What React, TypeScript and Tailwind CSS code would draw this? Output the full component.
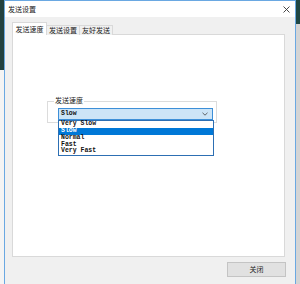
import React from "react";

const cjk = { fontFamily: '"Noto Sans CJK SC", "Noto Sans", sans-serif' };
const mono = { fontFamily: '"Liberation Mono", "DejaVu Sans Mono", monospace' };

const items = ["Very Slow", "Slow", "Normal", "Fast", "Very Fast"];

export default function App() {
  return (
    <div className="w-[300px] h-[284px] flex overflow-hidden bg-[#d9d9d9]" style={cjk}>
      <div className="w-[4px] flex flex-col">
        <div className="h-[70px] bg-[#23413f]" />
        <div className="flex-1 bg-[#f4f4f4]" />
      </div>
      <div className="w-[292px] h-[284px] border-x border-t border-[#6aa8e2] flex flex-col bg-[#f0f0f0]">
        <div className="h-[16px] bg-white flex items-center justify-between pl-[3px] pr-[5px]">
          <span className="text-[7px] leading-none text-[#222]">发送设置</span>
          <svg width="7" height="7" viewBox="0 0 7 7">
            <path d="M0.5 0.5L6.5 6.5M6.5 0.5L0.5 6.5" stroke="#333" strokeWidth="0.9" />
          </svg>
        </div>
        <div className="pl-[7px] pt-[6px] pr-[9px] flex flex-col">
          <div className="h-[12px] flex items-end relative z-10 -mb-[1px]">
            <div className="h-[13px] w-[35px] bg-white border-x border-t border-[#d9d9d9] flex items-center justify-center text-[7px] leading-none text-[#222]">
              发送速度
            </div>
            <div className="h-[10px] w-[33px] bg-[#f0f0f0] border border-b-0 border-l-0 border-[#d9d9d9] flex items-center justify-center text-[7px] leading-none text-[#222]">
              发送设置
            </div>
            <div className="h-[10px] w-[33px] bg-[#f0f0f0] border border-b-0 border-l-0 border-[#d9d9d9] flex items-center justify-center text-[7px] leading-none text-[#222]">
              友好发送
            </div>
          </div>
          <div className="w-[273px] h-[223px] bg-white border border-[#d9d9d9] pt-[66px] pl-[34px]">
            <div className="relative w-[170px] h-[22px] border border-[#dcdcdc]">
              <span className="absolute -top-[5px] left-[6px] bg-white px-[1px] text-[7px] leading-none text-[#222]">
                发送速度
              </span>
              <div className="absolute left-[10px] top-[6px] w-[155px] h-[12px] bg-[#cce4f7] border border-[#3d8fd8] flex items-center justify-between pl-[2px] pr-[4px]">
                <span className="text-[6.5px] leading-none font-bold text-[#111]" style={mono}>Slow</span>
                <svg width="6" height="4" viewBox="0 0 6 4">
                  <path d="M0.5 0.8L3 3.2L5.5 0.8" stroke="#444" strokeWidth="0.8" fill="none" />
                </svg>
              </div>
              <div className="absolute left-[10px] top-[18px] w-[156px] h-[36px] bg-white border border-[#2d6fb3] flex flex-col">
                {items.map((it) => (
                  <div
                    key={it}
                    className={
                      it === "Slow"
                        ? "h-[7px] bg-[#0078d7] text-white flex items-center pl-[2px]"
                        : "h-[7px] text-[#111] flex items-center pl-[2px]"
                    }
                  >
                    <span className="text-[6.5px] leading-none font-bold" style={mono}>{it}</span>
                  </div>
                ))}
              </div>
            </div>
          </div>
          <div className="flex justify-end mt-[5px]">
            <div className="w-[59px] h-[15px] bg-[#e1e1e1] border border-[#c4c4c4] flex items-center justify-center text-[7px] leading-none text-[#222]">
              关闭
            </div>
          </div>
        </div>
      </div>
      <div className="w-[4px] flex flex-col">
        <div className="h-[24px] bg-[#1f4744]" />
        <div className="flex-1 bg-[#d4d4d4]" />
      </div>
    </div>
  );
}
